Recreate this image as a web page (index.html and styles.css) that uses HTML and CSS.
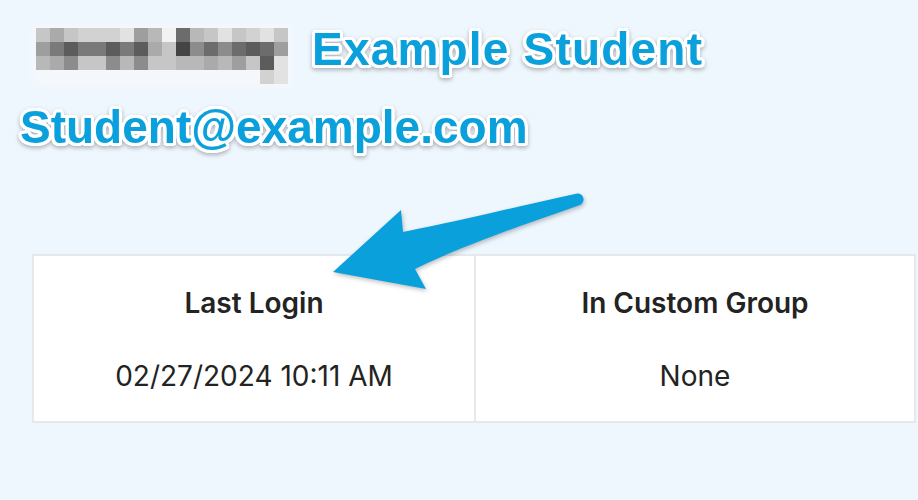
FILE: index.html
```html
<!DOCTYPE html>
<html lang="en">
<head>
<meta charset="utf-8">
<title>Student profile</title>
<link rel="stylesheet" href="styles.css">
</head>
<body>
<main class="page">
  <section class="profile">
    <div class="name-row">
      <div class="redacted" aria-hidden="true">
        <span class="px i"></span><span class="px g"></span><span class="px i"></span><span class="px j"></span><span class="px j"></span><span class="px j"></span><span class="px k"></span><span class="px f"></span><span class="px h"></span><span class="px l"></span><span class="px c"></span><span class="px h"></span><span class="px i"></span><span class="px k"></span><span class="px i"></span><span class="px j"></span><span class="px k"></span><span class="px i"></span>
        <span class="px f"></span><span class="px d"></span><span class="px b"></span><span class="px d"></span><span class="px d"></span><span class="px b"></span><span class="px d"></span><span class="px b"></span><span class="px g"></span><span class="px i"></span><span class="px a"></span><span class="px e"></span><span class="px c"></span><span class="px e"></span><span class="px c"></span><span class="px b"></span><span class="px c"></span><span class="px f"></span>
        <span class="px h"></span><span class="px g"></span><span class="px e"></span><span class="px i"></span><span class="px i"></span><span class="px e"></span><span class="px h"></span><span class="px e"></span><span class="px i"></span><span class="px i"></span><span class="px h"></span><span class="px h"></span><span class="px g"></span><span class="px h"></span><span class="px f"></span><span class="px i"></span><span class="px b"></span><span class="px k"></span>
        <span class="px n"></span><span class="px n"></span><span class="px n"></span><span class="px n"></span><span class="px n"></span><span class="px n"></span><span class="px n"></span><span class="px n"></span><span class="px n"></span><span class="px n"></span><span class="px n"></span><span class="px n"></span><span class="px n"></span><span class="px n"></span><span class="px n"></span><span class="px n"></span><span class="px j"></span><span class="px k"></span>
      </div>
      <h1 class="callout name">Example Student</h1>
    </div>
    <p class="callout email">Student@example.com</p>
  </section>

  <section class="stats">
    <div class="stat">
      <div class="stat-label">Last Login</div>
      <div class="stat-value">02/27/2024 10:11 AM</div>
    </div>
    <div class="stat">
      <div class="stat-label">In Custom Group</div>
      <div class="stat-value">None</div>
    </div>
  </section>

  <!-- annotation arrow pointing at the Last Login card -->
  <svg class="pointer" width="918" height="500" viewBox="0 0 918 500" aria-hidden="true">
    <path d="M333 272 L401 210 L403 232 C455 222 520 206 575 194 A5.6 5.6 0 0 1 580 205 C520 226 462 246 415 269 L426 289 Z" fill="#0aa0dc"/>
  </svg>
</main>
</body>
</html>
```
FILE: styles.css
```css
html, body {
  margin: 0;
  padding: 0;
}

body {
  background: #eef6fe;
  font-family: "Inter", "Noto Sans", sans-serif;
  color: #222;
}

.page {
  position: relative;
  width: 918px;
  height: 500px;
  overflow: hidden;
}

.profile {
  padding: 26px 0 0 20px;
}

.name-row {
  display: flex;
  align-items: flex-start;
  gap: 24px;
  height: 58px;
}

/* blurred-out avatar/name block */
.redacted {
  display: grid;
  grid-template-columns: repeat(18, 14px);
  grid-auto-rows: 14px;
  margin: 2px 0 0 16px;
  background: #f4f8fc;
  box-shadow: 0 0 6px 4px #f4f8fc;
}

.px { display: block; }
.px.a { background: #444444; }
.px.b { background: #5c5c5c; }
.px.c { background: #6c6c6c; }
.px.d { background: #7a7a7a; }
.px.e { background: #8c8c8c; }
.px.f { background: #9e9e9e; }
.px.g { background: #aaaaaa; }
.px.h { background: #b8b8b8; }
.px.i { background: #c6c6c6; }
.px.j { background: #d2d2d2; }
.px.k { background: #e2e2e2; }
.px.l { background: #f2f2f2; }
.px.n { background: transparent; }

/* big outlined annotation text */
.callout {
  margin: 0;
  font-family: "Liberation Sans", Arial, sans-serif;
  font-weight: 700;
  font-size: 46px;
  line-height: 46px;
  color: #0aa0dc;
  white-space: nowrap;
  text-shadow:
    3px 0 0 #fff, -3px 0 0 #fff, 0 3px 0 #fff, 0 -3px 0 #fff,
    2px 2px 0 #fff, -2px 2px 0 #fff, 2px -2px 0 #fff, -2px -2px 0 #fff,
    3px 1.5px 0 #fff, -3px 1.5px 0 #fff, 3px -1.5px 0 #fff, -3px -1.5px 0 #fff,
    1.5px 3px 0 #fff, -1.5px 3px 0 #fff, 1.5px -3px 0 #fff, -1.5px -3px 0 #fff;
  filter: drop-shadow(0 2px 2px rgba(0, 0, 0, 0.28));
}

.name {
  letter-spacing: 1.2px;
}

.email {
  margin-top: 20px;
}

.stats {
  display: grid;
  grid-template-columns: 1fr 1fr;
  width: 880px;
  margin: 104px 0 0 32px;
  background: #fff;
  border: 2px solid #e6e8eb;
}

.stat {
  padding: 30px 0 28px;
  text-align: center;
}

.stat + .stat {
  border-left: 2px solid #e6e8eb;
}

.stat-label {
  font-weight: 600;
  font-size: 28px;
  line-height: 34px;
  color: #232323;
}

.stat-value {
  margin-top: 39px;
  font-size: 28px;
  line-height: 34px;
  color: #232323;
}

.pointer {
  position: absolute;
  left: 0;
  top: 0;
  pointer-events: none;
  filter: drop-shadow(1px 2px 2px rgba(0, 0, 0, 0.25));
}
```
